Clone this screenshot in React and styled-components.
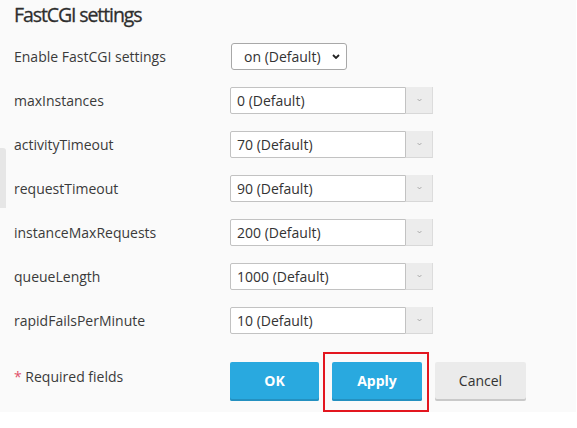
import React from 'react'
import styled, { createGlobalStyle } from 'styled-components'

const GlobalStyle = createGlobalStyle`
  body {
    margin: 0;
    background: #fff;
    font-family: "Open Sans", "DejaVu Sans", sans-serif;
    color: #333;
  }
`

const fields = [
  { label: 'maxInstances', value: '0 (Default)' },
  { label: 'activityTimeout', value: '70 (Default)' },
  { label: 'requestTimeout', value: '90 (Default)' },
  { label: 'instanceMaxRequests', value: '200 (Default)' },
  { label: 'queueLength', value: '1000 (Default)' },
  { label: 'rapidFailsPerMinute', value: '10 (Default)' },
]

const Panel = styled.div`
  position: relative;
  width: 576px;
  box-sizing: border-box;
  background: #fafafa;
  padding: 1px 14px 11px;
`

const SideTab = styled.div`
  position: absolute;
  left: 0;
  top: 148px;
  width: 6px;
  height: 60px;
  background: #e6e6e6;
  border-radius: 0 3px 0 0;
`

const Title = styled.h2`
  margin: 0 0 14px;
  font-size: 19.5px;
  font-weight: 400;
  letter-spacing: -1.1px;
  line-height: 28px;
  color: #2e2e2e;
  -webkit-text-stroke: 0.3px #2e2e2e;
`

const Form = styled.div`
  display: flex;
  flex-direction: column;
  gap: 17px;
`

const Row = styled.div`
  display: flex;
  align-items: center;
  height: 27px;
`

const Label = styled.div`
  width: 216px;
  font-size: 14px;
  color: #3a3a3a;
`

const SelectBox = styled.div`
  position: relative;
  width: 116px;
  height: 27px;
  box-sizing: border-box;
  border: 1px solid #a8a8a8;
  border-radius: 3px;
  background: #fff;
  display: flex;
  align-items: center;
  padding-left: 12px;
  font-size: 14px;
  color: #333;
  margin-left: 1px;
`

const SelectArrow = styled.svg`
  position: absolute;
  right: 6px;
  top: 10px;
`

const Combo = styled.div`
  display: flex;
  height: 27px;
`

const Input = styled.div`
  width: 176px;
  box-sizing: border-box;
  border: 1px solid #c2c2c2;
  border-radius: 2px 0 0 2px;
  background: #fff;
  display: flex;
  align-items: center;
  padding-left: 6px;
  font-size: 14px;
  color: #333;
`

const ComboButton = styled.div`
  width: 27px;
  background: #ececec;
  border-right: 1px solid #dcdcdc;
  border-bottom: 1px solid #d8d8d8;
  box-sizing: border-box;
  display: flex;
  align-items: center;
  justify-content: center;
`

const Footer = styled.div`
  display: flex;
  align-items: flex-start;
  margin-top: 28px;
`

const Required = styled.div`
  width: 216px;
  padding-top: 5px;
  font-size: 14px;
  color: #3a3a3a;
`

const Star = styled.span`
  color: #e0506a;
`

const Buttons = styled.div`
  display: flex;
  gap: 13px;
`

const Button = styled.button`
  width: ${p => p.$w || 89}px;
  height: 39px;
  border: none;
  border-radius: 2px;
  font-family: "Open Sans", "DejaVu Sans", sans-serif;
  font-size: 14px;
  padding: 0 0 2px;
  cursor: pointer;
  font-weight: ${p => (p.$primary ? 700 : 400)};
  color: ${p => (p.$primary ? '#fff' : '#333')};
  background: ${p => (p.$primary ? '#29a9df' : '#ebebeb')};
  box-shadow: inset 0 -2px 0 ${p => (p.$primary ? '#2490c0' : '#c9c9c9')};
`

const Highlight = styled.div`
  position: relative;
`

const RedFrame = styled.div`
  position: absolute;
  left: -9px;
  top: -10px;
  width: 106px;
  height: 60px;
  box-sizing: border-box;
  border: 2px solid #e3161f;
  pointer-events: none;
`

const Chevron = ({ color = '#333', w = 8, h = 5, sw = 2 }) => (
  <svg width={w} height={h} viewBox="0 0 8 5">
    <path d="M1 1l3 3 3-3" fill="none" stroke={color} strokeWidth={sw} />
  </svg>
)

export default function App() {
  return (
    <>
      <GlobalStyle />
      <Panel>
        <SideTab />
        <Title>FastCGI settings</Title>
        <Form>
          <Row>
            <Label>Enable FastCGI settings</Label>
            <SelectBox>
              on (Default)
              <SelectArrow width="8" height="5" viewBox="0 0 8 5">
                <path d="M1 1l3 3 3-3" fill="none" stroke="#222" strokeWidth="1.8" />
              </SelectArrow>
            </SelectBox>
          </Row>
          {fields.map(f => (
            <Row key={f.label}>
              <Label>{f.label}</Label>
              <Combo>
                <Input>{f.value}</Input>
                <ComboButton>
                  <Chevron color="#999" w={5} h={4} sw={1.3} />
                </ComboButton>
              </Combo>
            </Row>
          ))}
        </Form>
        <Footer>
          <Required>
            <Star>*</Star> Required fields
          </Required>
          <Buttons>
            <Button $primary>OK</Button>
            <Highlight>
              <Button $primary $w={90}>Apply</Button>
              <RedFrame />
            </Highlight>
            <Button $w={91}>Cancel</Button>
          </Buttons>
        </Footer>
      </Panel>
    </>
  )
}
